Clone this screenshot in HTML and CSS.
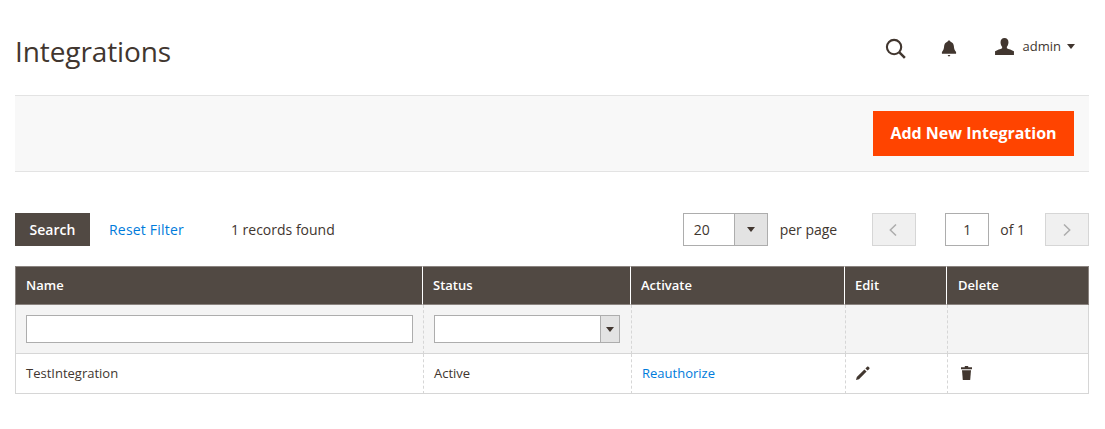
FILE: index.html
```html
<!DOCTYPE html>
<html>
<head>
    <title>Integrations</title>
    <link rel="stylesheet" href="styles.css">
</head>
<body>

    <!-- Page header -->
    <header class="page-header">
        <h1 class="page-title">Integrations</h1>
        <div class="header-actions">
            <svg class="icon-search" width="21" height="21" viewBox="0 0 22 22">
                <circle cx="9.500" cy="9.500" r="7.500" fill="none" stroke="#41362f" stroke-width="2.200"/>
                <path d="M14.800 14.800L20.800 20.800" stroke="#41362f" stroke-width="2.600"/>
            </svg>
            <svg class="icon-bell" width="16" height="17" viewBox="0 0 16 18">
                <path d="M8 0.500c1 0 1.500.600 1.600 1.400 2.400.700 3.500 2.700 3.600 5.100.100 2.500.800 4 2.300 5.600v1.900H.500v-1.900C2 11 2.700 9.500 2.800 7c.100-2.400 1.200-4.400 3.600-5.100C6.500 1.100 7 .500 8 .500z" fill="#41362f"/>
                <path d="M6.500 16h3L8 17.800z" fill="#41362f"/>
            </svg>
            <div class="user-menu">
                <svg class="icon-user" width="19" height="17" viewBox="0 0 20 18">
                    <path d="M10 0c2.700 0 4.200 1.900 4.200 4.500 0 1.900-.700 3.700-1.700 4.800v1.600c1.700 1 5.500 1.800 7.500 3.200V18H0v-3.900c2-1.400 5.800-2.200 7.500-3.200V9.300C6.500 8.200 5.800 6.400 5.800 4.500 5.800 1.900 7.300 0 10 0z" fill="#41362f"/>
                </svg>
                <span class="user-name">admin</span>
                <span class="arrow-down"></span>
            </div>
        </div>
    </header>

    <div class="action-bar">
        <button class="btn-primary">Add New Integration</button>
    </div>

    <!-- Grid toolbar -->
    <div class="grid-toolbar">
        <button class="btn-search">Search</button>
        <a class="reset-link" href="#">Reset Filter</a>
        <span class="records">1 records found</span>
        <div class="pager">
            <div class="select-box per-page">
                <span class="select-value">20</span>
                <span class="select-toggle"><span class="arrow-down"></span></span>
            </div>
            <span class="per-page-label">per page</span>
            <span class="page-btn prev">
                <svg width="8" height="12" viewBox="0 0 8 12"><path d="M7 .500L1.300 6 7 11.500" fill="none" stroke="#adadad" stroke-width="1.500"/></svg>
            </span>
            <span class="page-input">1</span>
            <span class="page-total">of 1</span>
            <span class="page-btn">
                <svg width="8" height="12" viewBox="0 0 8 12"><path d="M1 .500L6.700 6 1 11.500" fill="none" stroke="#adadad" stroke-width="1.500"/></svg>
            </span>
        </div>
    </div>

    <table class="grid">
        <colgroup>
            <col class="col-name">
            <col class="col-status">
            <col class="col-activate">
            <col class="col-edit">
            <col>
        </colgroup>
        <thead>
            <tr>
                <th>Name</th>
                <th>Status</th>
                <th>Activate</th>
                <th>Edit</th>
                <th>Delete</th>
            </tr>
        </thead>
        <tbody>
            <tr class="filters">
                <td><div class="filter-input"></div></td>
                <td>
                    <div class="select-box status-select">
                        <span class="select-value"></span>
                        <span class="select-toggle"><span class="arrow-down"></span></span>
                    </div>
                </td>
                <td></td>
                <td></td>
                <td></td>
            </tr>
            <tr class="data-row">
                <td>TestIntegration</td>
                <td>Active</td>
                <td><a href="#">Reauthorize</a></td>
                <td>
                    <svg class="row-icon" width="14" height="14" viewBox="0 0 14 14">
                        <path d="M0 14l.800-3 7.600-7.600 2.200 2.200L3 13.200z" fill="#41362f"/>
                        <path d="M9.400 2.400l1.700-1.700c.400-.400.900-.400 1.300 0l.900.900c.400.400.400.900 0 1.300l-1.700 1.700z" fill="#41362f"/>
                    </svg>
                </td>
                <td>
                    <svg class="row-icon trash" width="11" height="14" viewBox="0 0 11 14">
                        <path d="M3.800 0h3.400v1.200H11v2H0v-2h3.800z" fill="#41362f"/>
                        <path d="M1 4.200h9L9.200 14H1.800z" fill="#41362f"/>
                    </svg>
                </td>
            </tr>
        </tbody>
    </table>

</body>
</html>
```

FILE: styles.css
```css
* {
    box-sizing: border-box;
}

body {
    margin: 0;
    padding: 0 16px 0 15px;
    font-family: "Open Sans", sans-serif;
    font-size: 14px;
    color: #41362f;
    background-color: #fff;
}

a {
    color: #007bdb;
    text-decoration: none;
}

/* Page header */
.page-header {
    display: flex;
    align-items: center;
    justify-content: space-between;
    height: 95px;
    padding-top: 6px;
}

.page-title {
    margin: 0;
    font-size: 28px;
    font-weight: 400;
    letter-spacing: -.1px;
    color: #41362f;
}

.header-actions {
    display: flex;
    align-items: center;
    padding-right: 14px;
    padding-bottom: 4px;
}

.icon-search {
    margin-right: 35px;
}

.icon-bell {
    margin-right: 38px;
}

.user-menu {
    display: flex;
    align-items: center;
    margin-bottom: 4px;
}

.user-name {
    margin-left: 9px;
    margin-right: 6px;
    margin-bottom: 2px;
    font-size: 13px;
    color: #41362f;
}

.arrow-down {
    display: inline-block;
    width: 0;
    height: 0;
    border-left: 4.500px solid transparent;
    border-right: 4.500px solid transparent;
    border-top: 5px solid #41362f;
}

/* Orange action bar */
.action-bar {
    display: flex;
    justify-content: flex-end;
    height: 77px;
    padding: 15px 15px 0 0;
    background-color: #f8f8f8;
    border-top: 1px solid #e3e3e3;
    border-bottom: 1px solid #e3e3e3;
}

.btn-primary {
    width: 201px;
    height: 45px;
    padding: 0 0 2px;
    border: 0;
    font-family: inherit;
    font-size: 16px;
    font-weight: 700;
    color: #fff;
    background-color: #ff4400;
}

/* Toolbar above the grid */
.grid-toolbar {
    display: flex;
    align-items: center;
    height: 33px;
    margin-top: 41px;
}

.btn-search {
    width: 75px;
    height: 33px;
    padding: 0;
    border: 0;
    font-family: inherit;
    font-size: 14px;
    font-weight: 600;
    color: #fff;
    background-color: #514943;
}

.reset-link {
    margin-left: 19px;
    font-weight: 500;
    letter-spacing: .2px;
}

.records {
    margin-left: 47px;
}

.pager {
    display: flex;
    align-items: center;
    margin-left: auto;
}

.select-box {
    display: flex;
    background-color: #fff;
    border: 1px solid #adadad;
}

.select-value {
    flex: 1;
}

.select-toggle {
    display: flex;
    align-items: center;
    justify-content: center;
    background-color: #e3e3e3;
    border-left: 1px solid #adadad;
}

.per-page {
    width: 85px;
    height: 33px;
}

.per-page .select-value {
    padding-left: 10px;
    line-height: 31px;
}

.per-page .select-toggle {
    width: 33px;
}

.per-page-label {
    margin-left: 12px;
}

.page-btn {
    display: flex;
    align-items: center;
    justify-content: center;
    width: 44px;
    height: 33px;
    background-color: #f0f0f0;
    border: 1px solid #d6d6d6;
}

.prev {
    margin-left: 35px;
}

.prev svg {
    margin-right: 3px;
}

.page-input {
    width: 44px;
    height: 33px;
    margin-left: 29px;
    line-height: 31px;
    text-align: center;
    border: 1px solid #adadad;
}

.page-total {
    margin-left: 11px;
    margin-right: 20px;
}

/* Grid */
.grid {
    width: 100%;
    margin-top: 20px;
    border-collapse: separate;
    border-spacing: 0;
    table-layout: fixed;
    font-size: 13px;
}

.col-name {
    width: 408px;
}

.col-status {
    width: 208px;
}

.col-activate {
    width: 214px;
}

.col-edit {
    width: 102px;
}

.grid th {
    height: 39px;
    padding: 0 10px 2px;
    text-align: left;
    font-weight: 600;
    color: #fff;
    background-color: #514943;
    border-top: 1px solid #8a837f;
    border-bottom: 1px solid #8a837f;
    border-right: 1px solid #fff;
}

.grid th:first-child {
    border-left: 1px solid #8a837f;
}

.grid th:last-child {
    padding-left: 11px;
    border-right-color: #8a837f;
}

.grid td {
    padding: 0 10px;
    border-left: 1px dashed #d6d6d6;
    border-bottom: 1px solid #d6d6d6;
}

.grid td:first-child {
    border-left: 1px solid #d6d6d6;
}

.grid td:last-child {
    border-right: 1px solid #d6d6d6;
}

.filters td {
    height: 49px;
    background-color: #f4f4f4;
}

.data-row td {
    height: 40px;
    padding-bottom: 1px;
}

.filter-input {
    height: 28px;
    background-color: #fff;
    border: 1px solid #adadad;
}

.status-select {
    height: 28px;
    margin-right: 1px;
}

.status-select .select-toggle {
    width: 19px;
}

.row-icon {
    display: block;
}

.trash {
    margin-left: 3px;
}
```
